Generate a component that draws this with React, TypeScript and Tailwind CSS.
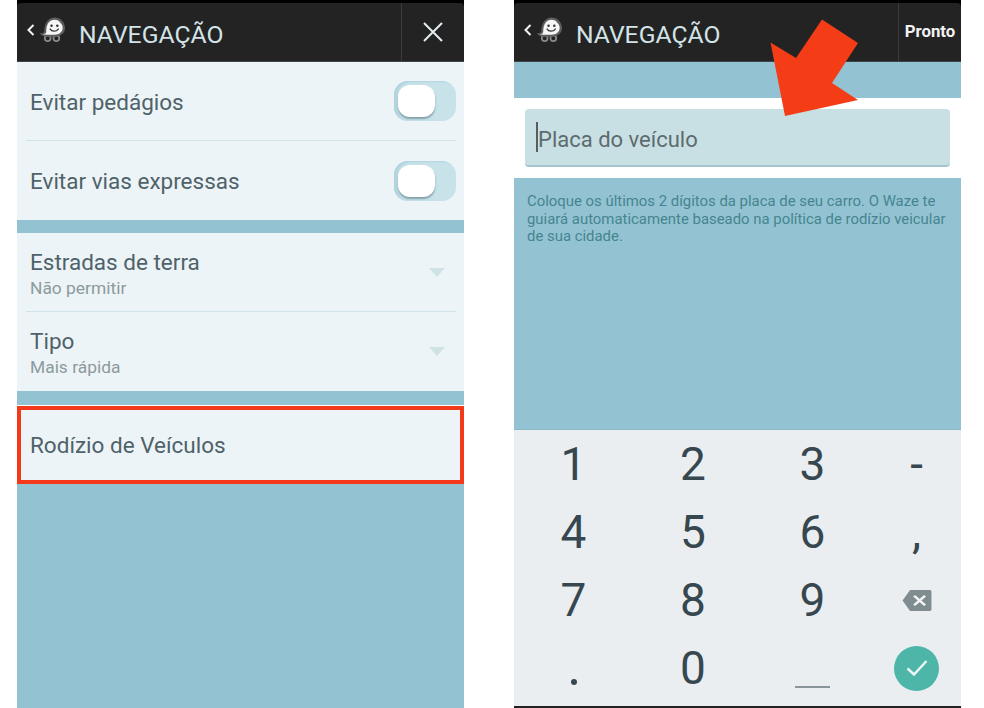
const FONT = "font-['Roboto','Liberation_Sans',sans-serif]";

function WazeIcon() {
  return (
    <svg width="27" height="27" viewBox="0 0 28 28" className="shrink-0">
      <circle cx="9" cy="23" r="3" fill="none" stroke="#8a8a8a" strokeWidth="1.8" />
      <circle cx="18" cy="23" r="3" fill="none" stroke="#8a8a8a" strokeWidth="1.8" />
      <path d="M5.5 16 C5.5 7 10 1.5 16 1.5 C22.5 1.5 27 6.5 27 12.5 C27 18 22.5 21.5 16 21.5 L8 21.5 C5 21.5 2 20 0.5 18 C2.5 18 5 18 5.5 16 Z" fill="#5e5e5e" />
      <path d="M7.5 16.5 C7.5 8 11 4 16 4 C19 4 21 5 22 7 C24 8.5 24.5 10.5 24.5 12.5 C24.5 16.5 21 19.5 16 19.5 L8 19.5 C6.5 19.5 5 19 3.8 18.6 C5.5 18.6 7.5 18.3 7.5 16.5 Z" fill="#f6f6f6" />
      <circle cx="13" cy="10" r="1.3" fill="#333" />
      <circle cx="19" cy="10" r="1.3" fill="#333" />
      <path d="M11.5 13.5 C13 16.5 18 16.5 20 13.5" fill="none" stroke="#333" strokeWidth="1.4" strokeLinecap="round" />
    </svg>
  );
}

function Chevron() {
  return (
    <svg width="10" height="14" viewBox="0 0 10 14" className="shrink-0">
      <path d="M7.5 2 L2.5 7 L7.5 12" fill="none" stroke="#eef3f5" strokeWidth="2" />
    </svg>
  );
}

function Header({ children }: { children: React.ReactNode }) {
  return (
    <div className="h-[62px] shrink-0 bg-black pt-[3px]">
      <div className="flex h-[59px] items-stretch rounded-t-[4px] border-b border-[#3c4547] bg-[#232323]">
        <div className="flex flex-1 items-center pl-[9px] pb-[4px]">
          <Chevron />
          <div className="ml-[3px] mb-[1px]">
            <WazeIcon />
          </div>
          <span className="ml-[13px] mt-[10px] text-[24.7px] leading-none text-[#d3e3e8]">NAVEGAÇÃO</span>
        </div>
        {children}
      </div>
    </div>
  );
}

function ToggleRow({ label, border }: { label: string; border?: boolean }) {
  return (
    <div className={`ml-[9px] mr-[8px] flex h-[79px] items-center justify-between pl-[4px] ${border ? "border-b border-[#cfe3ea]" : ""}`}>
      <span className="mt-[2px] text-[22.5px] leading-none text-[#4f6269]">{label}</span>
      <div className="relative h-[40px] w-[62px] rounded-[14px] bg-[#c8e2ea] shadow-[inset_3px_1px_2px_#b0d3dd]">
        <div className="absolute left-[4px] top-[4px] h-[32px] w-[37px] rounded-[12px] bg-white shadow-[0_2px_2px_#7fa0aa]" />
      </div>
    </div>
  );
}

function SelectRow({ label, value, border }: { label: string; value: string; border?: boolean }) {
  return (
    <div className={`ml-[9px] mr-[8px] flex h-[79px] items-center justify-between pl-[4px] pr-[11px] ${border ? "border-b border-[#cfe3ea]" : ""}`}>
      <div className="mt-[2px] flex flex-col">
        <span className="text-[22.5px] leading-[28px] text-[#4f6269]">{label}</span>
        <span className="mt-[1px] text-[17.4px] leading-[22px] text-[#8d9a9e]">{value}</span>
      </div>
      <div className="h-0 w-0 border-x-[8px] border-t-[9px] border-x-transparent border-t-[#cfe3e6]" />
    </div>
  );
}

const KEYS = ["1", "2", "3", "-", "4", "5", "6", ",", "7", "8", "9"];

function Keypad() {
  return (
    <div className="shrink-0 bg-[#eaeef1] pb-[4px]">
      <div className="grid grid-cols-[119px_120px_119px_89px] auto-rows-[68px] border-t border-[#8fb8c7] text-[46px] leading-none text-[#37474f]">
        {KEYS.map((k) => (
          <div key={k} className="flex items-center justify-center">{k}</div>
        ))}
        <div className="flex items-center justify-center">
          <svg width="30" height="23" viewBox="0 0 26 24" preserveAspectRatio="none">
            <path d="M7 1 H24 a1.5 1.5 0 0 1 1.5 1.5 V21.5 a1.5 1.5 0 0 1 -1.5 1.5 H7 L0.5 12 Z" fill="#7f8c90" />
            <path d="M10.5 7 L20 17 M20 7 L10.5 17" stroke="#f2f4f5" strokeWidth="2.4" />
          </svg>
        </div>
        <div className="flex items-center justify-center"><span className="mt-[28px] h-[6px] w-[6px] rounded-full bg-[#37474f]" /></div>
        <div className="flex items-center justify-center">0</div>
        <div className="flex items-center justify-center"><span className="mt-[38px] h-[2px] w-[35px] bg-[#8a9599]" /></div>
        <div className="flex items-center justify-center">
          <div className="flex h-[45px] w-[45px] items-center justify-center rounded-full bg-[#4db6a9]">
            <svg width="22" height="18" viewBox="0 0 22 18">
              <path d="M1.5 9.5 L8 15.5 L20.5 2" fill="none" stroke="#eef8f6" strokeWidth="2.4" />
            </svg>
          </div>
        </div>
      </div>
    </div>
  );
}

export default function App() {
  return (
    <div className={`${FONT} flex h-[708px] w-[984px] gap-[50px] overflow-hidden bg-white pl-[17px]`}>
      <div className="flex h-full w-[447px] flex-col bg-[#93c3d3]">
        <Header>
          <div className="flex w-[63px] items-center justify-center border-l border-[#3a3a3a]">
            <svg width="22" height="22" viewBox="0 0 22 22">
              <path d="M2 2 L20 20 M20 2 L2 20" stroke="#e4edf0" strokeWidth="2" />
            </svg>
          </div>
        </Header>
        <div className="bg-[#ecf4f7]">
          <ToggleRow label="Evitar pedágios" border />
          <ToggleRow label="Evitar vias expressas" />
        </div>
        <div className="h-[13px] shrink-0" />
        <div className="bg-[#ecf4f7]">
          <SelectRow label="Estradas de terra" value="Não permitir" border />
          <SelectRow label="Tipo" value="Mais rápida" />
        </div>
        <div className="h-[15px] shrink-0 border-b border-white" />
        <div className="flex h-[78px] shrink-0 items-center border-[4px] border-[#f4391a] bg-[#ecf4f7] pl-[9px]">
          <span className="text-[22.5px] leading-none text-[#4f6269]">Rodízio de Veículos</span>
        </div>
      </div>

      <div className="relative flex h-full w-[447px] flex-col bg-[#93c3d3]">
        <Header>
          <div className="flex w-[63px] items-center justify-center border-l border-[#3a3a3a] pb-[2px]">
            <span className="text-[16.8px] font-bold leading-none text-[#f2f2f2]">Pronto</span>
          </div>
        </Header>
        <div className="h-[36px] shrink-0" />
        <div className="h-[80px] shrink-0 bg-white px-[11px] pt-[11px]">
          <div className="flex h-[58px] items-center rounded-[4px] border-b-2 border-[#a3c6cd] bg-[#c8e0e3] pl-[11px]">
            <span className="h-[30px] w-[2px] bg-[#555f63]" />
            <span className="mt-[5px] text-[22px] leading-none text-[#5d6b6f]">Placa do veículo</span>
          </div>
        </div>
        <p className="mx-[13px] mt-[15px] flex-1 text-[14.9px] leading-[17.5px] text-[#46858f]">
          Coloque os últimos 2 dígitos da placa de seu carro. O Waze te guiará automaticamente baseado na política de rodízio veicular de sua cidade.
        </p>
        <Keypad />
        <div className="h-[2px] shrink-0 bg-[#222]" />
        <svg width="92" height="98" viewBox="0 0 92 98" className="absolute left-[255px] top-[19px]">
          <path d="M16.5 23.5 L42 39 L68 0.5 L104 24 L78 64 L104 81 L31 97 Z" fill="#f43c17" transform="translate(-15 0)" />
        </svg>
      </div>
    </div>
  );
}
